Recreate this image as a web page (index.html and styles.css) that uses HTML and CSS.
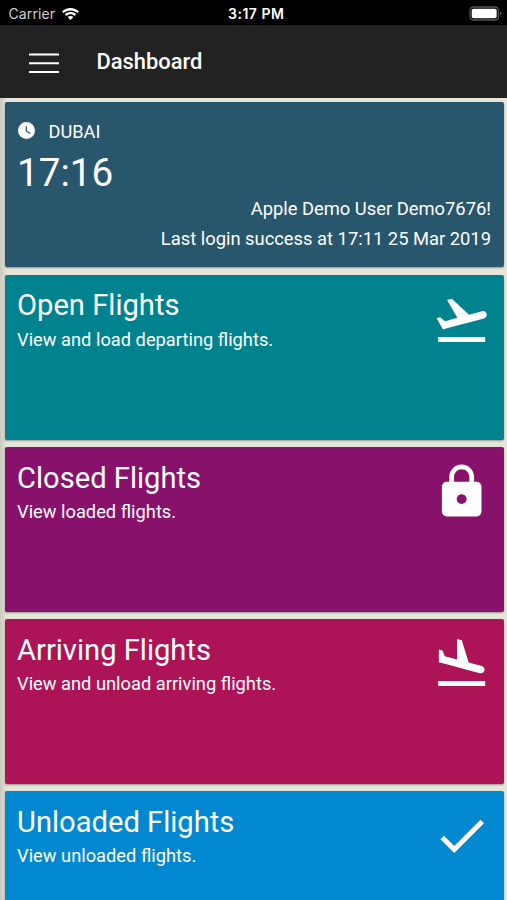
FILE: index.html
```html
<!DOCTYPE html>
<html lang="en">
<head>
<meta charset="utf-8">
<title>Dashboard</title>
<link rel="stylesheet" href="styles.css">
</head>
<body>
<div class="status">
  <div class="carrier"><span>Carrier</span>
    <svg class="wifi" viewBox="0 0 17 12"><path d="M8.5 0C5.2 0 2.200 1.300 0 3.400L1.600 5.100C3.400 3.400 5.800 2.400 8.500 2.400S13.600 3.400 15.400 5.100L17 3.400C14.800 1.300 11.800 0 8.500 0Z"/><path d="M8.500 4C6.300 4 4.300 4.800 2.800 6.200L4.400 7.900C5.500 6.900 6.900 6.300 8.500 6.300S11.500 6.900 12.600 7.900L14.200 6.200C12.700 4.800 10.700 4 8.500 4Z"/><path d="M8.500 7.900C7.400 7.900 6.400 8.300 5.600 9L8.500 12L11.400 9C10.600 8.300 9.600 7.900 8.500 7.900Z"/></svg>
  </div>
  <div class="clock">3:17 PM</div>
  <svg class="battery" viewBox="0 0 33 16"><rect x="1" y="1" width="28.500" height="13" rx="3.700" fill="none" stroke="#555" stroke-width="1.300"/><rect x="2.700" y="2.700" width="25" height="9.600" rx="1.800" fill="#fff"/><path d="M31 5.500v4q1.500-.5 1.500-2t-1.500-2z" fill="#555"/></svg>
</div>
<header class="bar">
  <svg class="menu" viewBox="0 0 30 21"><path d="M0 1.500h30M0 10.200h30M0 18.900h30" stroke="#fff" stroke-width="2"/></svg>
  <h1>Dashboard</h1>
</header>
<main class="cards">
  <section class="card station">
    <div class="place"><svg class="time-icon" viewBox="2 2 20 20"><path fill-rule="evenodd" d="M12 2a10 10 0 1 0 0 20 10 10 0 0 0 0-20zm4.200 14.200L11 13V7h1.500v5.200l4.500 2.700z"/></svg><span>DUBAI</span></div>
    <div class="time">17:16</div>
    <div class="user">Apple Demo User Demo7676!</div>
    <div class="login">Last login success at 17:11 25 Mar 2019</div>
  </section>
  <section class="card open">
    <div><h2>Open Flights</h2><p>View and load departing flights.</p></div>
    <svg class="icon" viewBox="0 0 24 24"><path d="M2.500 19h19v2h-19zm19.570-9.360c-.21-.8-1.040-1.280-1.840-1.060L14.920 10l-6.900-6.430-1.930.51 4.140 7.170-4.970 1.330-1.970-1.540-1.450.39 1.820 3.160.77 1.330 1.600-.43 5.310-1.420 4.350-1.160L21 11.490c.81-.23 1.280-1.050 1.070-1.850z"/></svg>
  </section>
  <section class="card closed">
    <div><h2>Closed Flights</h2><p>View loaded flights.</p></div>
    <svg class="icon" viewBox="0 0 24 24"><path d="M18 8h-1V6c0-2.760-2.240-5-5-5S7 3.240 7 6v2H6c-1.100 0-2 .9-2 2v10c0 1.100.9 2 2 2h12c1.100 0 2-.9 2-2V10c0-1.100-.9-2-2-2zm-6 9c-1.100 0-2-.9-2-2s.9-2 2-2 2 .9 2 2-.9 2-2 2zm3.100-9H8.900V6c0-1.710 1.390-3.100 3.100-3.100 1.710 0 3.100 1.390 3.100 3.100v2z"/></svg>
  </section>
  <section class="card arriving">
    <div><h2>Arriving Flights</h2><p>View and unload arriving flights.</p></div>
    <svg class="icon" viewBox="0 0 24 24"><path d="M2.500 19h19v2h-19zm7.180-5.730l4.350 1.160 5.310 1.420c.8.210 1.620-.26 1.840-1.060.21-.8-.26-1.620-1.060-1.840l-5.310-1.420-2.760-9.020L10.120 2v8.280L5.150 8.950l-.93-2.320-1.450-.39v5.170l1.600.43 5.310 1.430z"/></svg>
  </section>
  <section class="card unloaded">
    <div><h2>Unloaded Flights</h2><p>View unloaded flights.</p></div>
    <svg class="icon" viewBox="0 0 24 24"><path d="M9 16.170L4.830 12l-1.420 1.410L9 19 21 7l-1.410-1.410z"/></svg>
  </section>
</main>
</body>
</html>
```

FILE: styles.css
```css
* { box-sizing: border-box; }
html, body { height: 100%; }
body {
  margin: 0;
  overflow: hidden;
  background: #e6e6da;
  color: #fff;
  font-family: Roboto, "Liberation Sans", sans-serif;
  display: flex;
  flex-direction: column;
}
h1, h2, p { margin: 0; font-weight: 400; }
svg { display: block; fill: #fff; }
.status {
  flex: none;
  height: 25px;
  padding: 0 5px 0 8.500px;
  background: #000;
  display: grid;
  grid-template-columns: 1fr auto 1fr;
  align-items: center;
  font-family: Inter, "Liberation Sans", sans-serif;
  font-size: 14px;
  line-height: 27px;
}
.carrier { display: flex; align-items: center; gap: 7px; color: #d0d0d0; letter-spacing: .1px; }
.wifi { width: 17px; height: 12px; fill: #fff; }
.clock { font-weight: 600; letter-spacing: .5px; padding-left: 2px; }
.battery { justify-self: end; width: 33px; height: 16px; margin-top: 1px; }
.bar {
  flex: none;
  height: 73px;
  padding-left: 29px;
  background: #222;
  display: flex;
  align-items: center;
}
.menu { width: 30px; height: 21px; margin-top: 4px; }
.bar h1 { margin-left: 37.500px; font-size: 21.900px; font-weight: 500; line-height: 28px; }
.cards {
  flex: 1;
  min-height: 0;
  overflow: hidden;
  padding: 4.300px 3.500px 0 4.500px;
  background: linear-gradient(90deg, #c9c9c1 0, #dcdcd0 5px, #e6e6da 8px);
  display: flex;
  flex-direction: column;
  gap: 7.300px;
}
.card {
  flex: none;
  height: 165px;
  padding: 15px 12.500px 0;
  border-radius: 2px;
  box-shadow: 0 1px 2px rgba(0, 0, 0, .35);
  display: flex;
  justify-content: space-between;
}
.card:last-child {
  flex: 1;
  min-height: 0;
  height: auto;
  border-radius: 2px 2px 0 0;
}
.station { background: #28566c; flex-direction: column; justify-content: flex-start; padding-top: 17px; }
.open { background: #00838f; }
.closed { background: #88126b; }
.arriving { background: #ad1457; }
.unloaded { background: #0288d1; }
.place { display: flex; align-items: center; font-size: 18.200px; line-height: 25px; }
.time-icon { width: 17px; height: 17px; margin: -2px 14px 0 .5px; }
.time { font-size: 38.700px; line-height: 46px; margin-top: 5.500px; }
.user, .login { text-align: right; font-size: 18.350px; line-height: 30px; }
.user { margin-top: -1.500px; }
.card h2 { font-size: 29.150px; line-height: 32px; margin-top: -.4px; }
.card p { font-size: 18.300px; line-height: 24px; margin-top: 6.400px; }
.icon { flex: none; width: 59.400px; height: 59.400px; }
```
